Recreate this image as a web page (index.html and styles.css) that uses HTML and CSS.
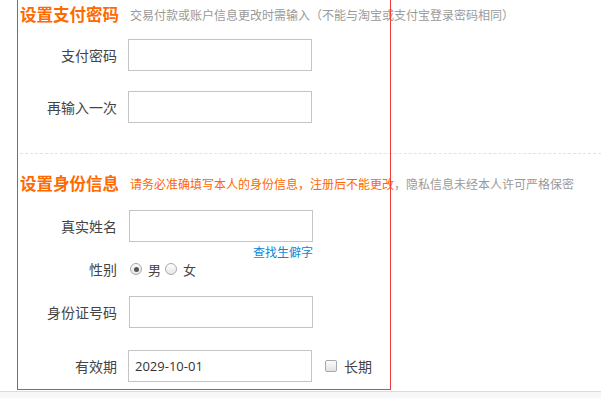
FILE: index.html
```html
<!DOCTYPE html>
<html lang="zh-CN">
<head>
<meta charset="utf-8">
<title>设置支付密码</title>
<link rel="stylesheet" href="styles.css">
</head>
<body>
<div class="page">
  <div class="section">
    <div class="head">
      <h2 class="title">设置支付密码</h2>
      <span class="tip">交易付款或账户信息更改时需输入（不能与淘宝或支付宝登录密码相同）</span>
    </div>
    <div class="row row-first">
      <label class="label">支付密码</label>
      <div class="field"></div>
    </div>
    <div class="row row-second">
      <label class="label">再输入一次</label>
      <div class="field"></div>
    </div>
  </div>
  <div class="section section-id">
    <div class="head">
      <h2 class="title">设置身份信息</h2>
      <span class="tip"><span class="warn">请务必准确填写本人的身份信息，注册后不能更改</span>，隐私信息未经本人许可严格保密</span>
    </div>
    <div class="row row-name">
      <label class="label">真实姓名</label>
      <div class="field field-shift"></div>
    </div>
    <div class="linkrow"><a class="link">查找生僻字</a></div>
    <div class="row row-gender">
      <label class="label">性别</label>
      <div class="radios">
        <span class="radio checked"></span><span class="opt">男</span>
        <span class="radio"></span><span class="opt">女</span>
      </div>
    </div>
    <div class="row row-idno">
      <label class="label">身份证号码</label>
      <div class="field field-shift"></div>
    </div>
    <div class="row row-date">
      <label class="label">有效期</label>
      <div class="field"><span class="value">2029-10-01</span></div>
      <span class="check"></span><span class="opt">长期</span>
    </div>
  </div>
  <div class="footer"></div>
  <div class="highlight"></div>
</div>
</body>
</html>
```
FILE: styles.css
```css
html, body {
  margin: 0;
  padding: 0;
  background: #fff;
}
body {
  font-family: "Noto Sans CJK SC", "Microsoft YaHei", sans-serif;
  color: #444;
  overflow: hidden;
}
.page {
  position: relative;
  width: 601px;
  height: 398px;
}
.section {
  padding-left: 20px;
}
.section-id {
  border-top: 1px dashed #e2e2e2;
  margin-top: 30px;
  margin-left: 20px;
  padding-left: 0;
}
.head {
  display: flex;
  align-items: center;
  height: 28px;
  white-space: nowrap;
}
.section-id .head {
  margin-top: 15px;
}
.title {
  margin: 0;
  font-size: 16.5px;
  font-weight: bold;
  color: #ff6a00;
  line-height: 28px;
}
.tip {
  margin-left: 11px;
  font-size: 12px;
  color: #9a9a9a;
}
.warn {
  color: #ff6600;
}
.row {
  display: flex;
  align-items: center;
  height: 32px;
}
.row-first { margin-top: 11px; }
.row-second { margin-top: 20px; }
.row-name { margin-top: 13px; }
.row-gender { margin-top: 0; height: 18px; }
.row-idno { margin-top: 18px; }
.row-date { margin-top: 22px; }
.label {
  width: 97px;
  text-align: right;
  font-size: 14px;
  color: #444;
  flex: none;
}
.field {
  box-sizing: border-box;
  width: 184px;
  height: 32px;
  margin-left: 11px;
  border: 1px solid #c4c4c4;
  background: #fff;
  display: flex;
  align-items: center;
  padding-left: 6px;
}
.field-shift {
  margin-left: 12px;
}
.value {
  font-size: 13px;
  color: #333;
  font-family: "Open Sans", "Noto Sans CJK SC", sans-serif;
}
.linkrow {
  height: 18px;
  width: 293px;
  display: flex;
  justify-content: flex-end;
  align-items: center;
}
.link {
  font-size: 12px;
  color: #0a88d8;
  cursor: pointer;
}
.radios {
  display: flex;
  align-items: center;
  margin-left: 13px;
}
.radio {
  box-sizing: border-box;
  width: 12px;
  height: 12px;
  border-radius: 50%;
  border: 1px solid #a9a9a9;
  background: linear-gradient(#fdfdfd, #e6e6e6);
  position: relative;
}
.radio.checked::after {
  content: "";
  position: absolute;
  left: 2.5px;
  top: 2.5px;
  width: 5px;
  height: 5px;
  border-radius: 50%;
  background: #555;
}
.opt {
  font-size: 13px;
  color: #444;
  margin-left: 6px;
  margin-right: 4px;
}
.check {
  box-sizing: border-box;
  width: 12px;
  height: 12px;
  border-radius: 2px;
  border: 1px solid #a9a9a9;
  background: linear-gradient(#fdfdfd, #e2e2e2);
  margin-left: 13px;
}
.row-date .opt {
  font-size: 14px;
  margin-left: 7px;
}
.footer {
  margin-top: 9px;
  border-top: 1px solid #dcdcdc;
  background: #f7f7f7;
  height: 10px;
}
.highlight {
  position: absolute;
  left: 17px;
  top: -1px;
  width: 372px;
  height: 389px;
  border: 1px solid #f23c3c;
  pointer-events: none;
}
```
